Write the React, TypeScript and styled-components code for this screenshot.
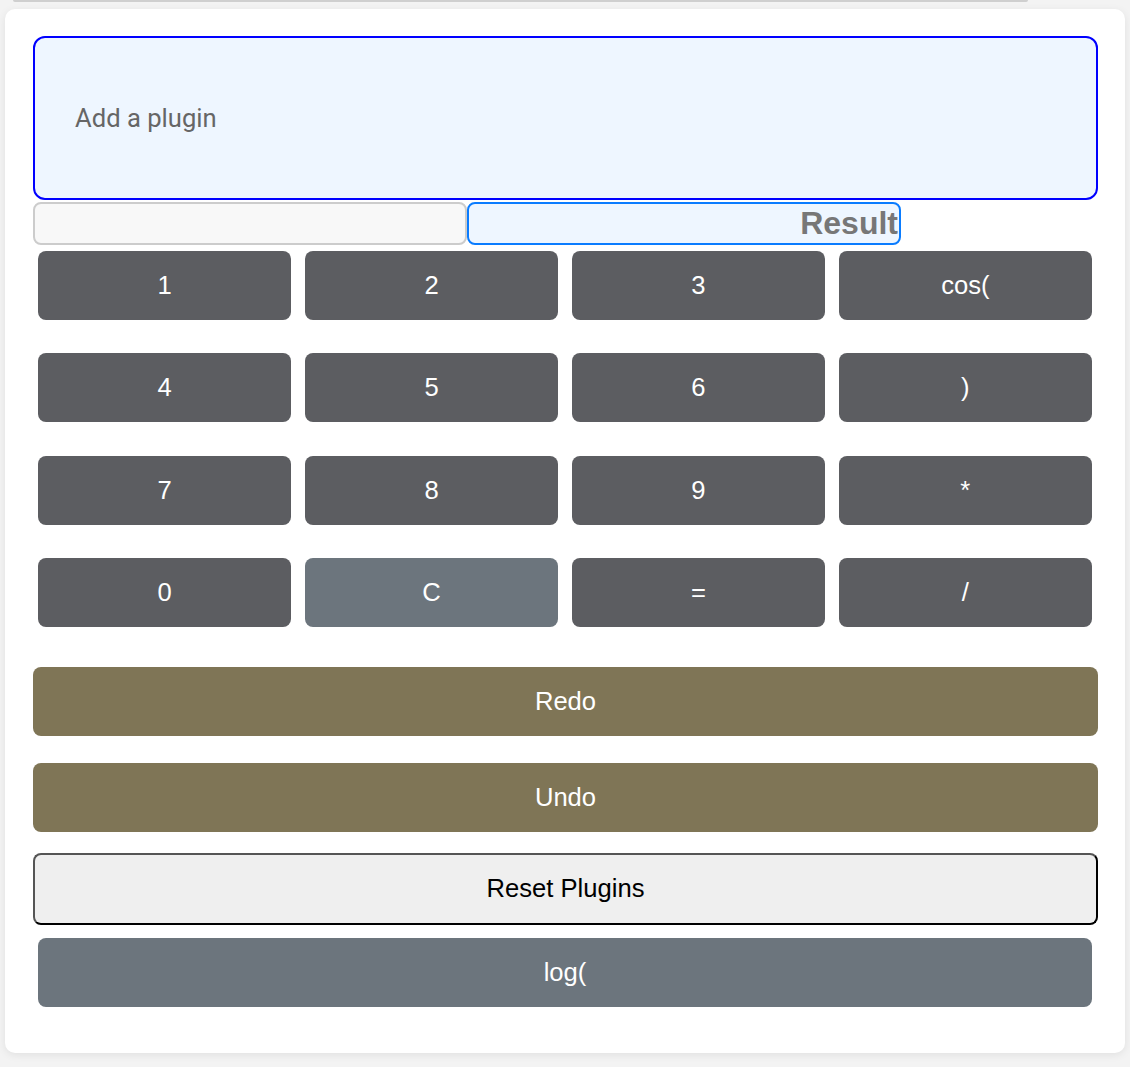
import React from "react";
import styled, { createGlobalStyle } from "styled-components";

const Global = createGlobalStyle`
  html, body { margin: 0; padding: 0; background: #f3f3f3; }
  body { font-family: "Liberation Sans", Arial, sans-serif; }
  * { box-sizing: border-box; }
`;

const Page = styled.div`
  width: 1130px;
  height: 1067px;
  padding: 0 5px 0 5px;
  overflow: hidden;
`;

const TopStrip = styled.div`
  height: 2px;
  margin: 0 97px 7px 8px;
  background: #cfcfcf;
  border-radius: 0 0 2px 2px;
`;

const Card = styled.div`
  width: 1120px;
  height: 1044px;
  background: #ffffff;
  border-radius: 10px;
  box-shadow: 0 2px 8px rgba(0, 0, 0, 0.08);
  padding: 28px 27px 0 28px;
  display: flex;
  flex-direction: column;
`;

const PluginInput = styled.div`
  height: 164px;
  margin-top: -1px;
  border: 2px solid #0000ff;
  border-radius: 12px;
  background: #eef6ff;
  display: flex;
  align-items: center;
  padding: 0 40px;
  font-family: Roboto, "Liberation Sans", sans-serif;
  font-size: 25.6px;
  color: #666666;
`;

const InputRow = styled.div`
  display: flex;
  margin-top: 2px;
`;

const Field = styled.div<{ $result?: boolean }>`
  width: 434px;
  height: 43px;
  border-radius: 8px;
  border: 2px solid ${(p) => (p.$result ? "#0a7cff" : "#cccccc")};
  background: ${(p) => (p.$result ? "#eef6ff" : "#f8f8f8")};
  display: flex;
  align-items: center;
  justify-content: flex-end;
  padding-right: 1px;
  font-family: "Liberation Sans", Arial, sans-serif;
  font-weight: bold;
  font-size: 32px;
  color: #777777;
`;

const Keypad = styled.div`
  display: grid;
  grid-template-columns: repeat(4, 1fr);
  grid-auto-rows: 69px;
  column-gap: 13.5px;
  row-gap: 33.3px;
  padding: 6px 6px 0 5px;
`;

const Key = styled.button<{ $alt?: boolean }>`
  border: none;
  border-radius: 8px;
  background: ${(p) => (p.$alt ? "#6c757d" : "#5c5d61")};
  color: #ffffff;
  font-family: "Liberation Sans", Arial, sans-serif;
  font-size: 25.6px;
  padding: 0;
  display: flex;
  align-items: center;
  justify-content: center;
`;

const ActionButton = styled.button<{ $mt: number }>`
  margin-top: ${(p) => p.$mt}px;
  height: 69px;
  border: none;
  border-radius: 8px;
  background: #7f7556;
  color: #ffffff;
  font-family: "Liberation Sans", Arial, sans-serif;
  font-size: 25.6px;
`;

const ResetButton = styled.button`
  margin-top: 21px;
  height: 72px;
  border-style: solid;
  border-width: 2px;
  border-color: #555555 #000000 #000000 #555555;
  border-radius: 8px;
  background: #efefef;
  color: #000000;
  font-family: "Liberation Sans", Arial, sans-serif;
  font-size: 25.6px;
`;

const LogButton = styled(Key)`
  margin: 13px 6px 0 5px;
  height: 69px;
`;

const keys: { label: string; alt?: boolean }[] = [
  { label: "1" }, { label: "2" }, { label: "3" }, { label: "cos(" },
  { label: "4" }, { label: "5" }, { label: "6" }, { label: ")" },
  { label: "7" }, { label: "8" }, { label: "9" }, { label: "*" },
  { label: "0" }, { label: "C", alt: true }, { label: "=" }, { label: "/" },
];

export default function App() {
  return (
    <>
      <Global />
      <Page>
        <TopStrip />
        <Card>
          <PluginInput>Add a plugin</PluginInput>
          <InputRow>
            <Field />
            <Field $result>Result</Field>
          </InputRow>
          <Keypad>
            {keys.map((k) => (
              <Key key={k.label} $alt={k.alt}>
                {k.label}
              </Key>
            ))}
          </Keypad>
          <ActionButton $mt={40}>Redo</ActionButton>
          <ActionButton $mt={27}>Undo</ActionButton>
          <ResetButton>Reset Plugins</ResetButton>
          <LogButton $alt>log(</LogButton>
        </Card>
      </Page>
    </>
  );
}
